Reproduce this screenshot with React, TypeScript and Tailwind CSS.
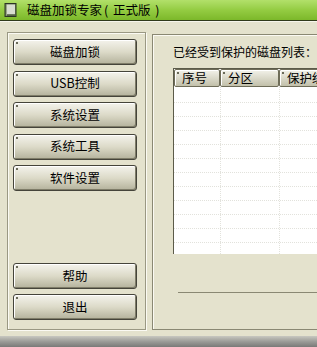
import React from 'react'

const font = { fontFamily: '"Noto Sans CJK SC", "Noto Sans", sans-serif' }

function XpButton({ label }: { label: string }) {
  return (
    <div className="relative h-[26px] w-[124px] rounded-[3px] border border-[#45443a] bg-gradient-to-b from-[#f4f3ec] via-[#dcdac8] to-[#b4b29c] shadow-[inset_-1px_-1px_0_#7e7c68,inset_1px_1px_0_#ffffff] flex items-center justify-center text-[12.5px] text-black">
      <span className="absolute left-[2px] top-[2px] h-[2px] w-[2px] bg-[#6a6a5a]" />
      {label}
    </div>
  )
}

function HeaderCell({ label, width }: { label: string; width: string }) {
  return (
    <div
      className={`relative h-[18px] shrink-0 overflow-hidden whitespace-nowrap rounded-[2px] border border-[#6e6c58] bg-gradient-to-b from-[#f3f2ea] to-[#c2c0aa] pl-[7px] text-[12.5px] leading-[16px] text-black shadow-[inset_1px_1px_0_#ffffff] ${width}`}
    >
      <span className="absolute left-[2px] top-[2px] h-[2px] w-[2px] bg-[#6a6a5a]" />
      {label}
    </div>
  )
}

export default function App() {
  const leftButtons = ['磁盘加锁', 'USB控制', '系统设置', '系统工具', '软件设置']

  return (
    <div className="relative h-[347px] w-[317px] overflow-hidden bg-[#e4e2cd]" style={font}>
      {/* title bar */}
      <div className="flex h-[21px] items-center border-b border-[#2f3a1a] bg-gradient-to-b from-[#b2e06a] via-[#94cc42] to-[#7cb82a] pl-[4px]">
        <svg width="14" height="15" viewBox="0 0 14 15">
          <rect x="1" y="0.5" width="11" height="13" fill="#6f7c5e" stroke="#2c3424" />
          <rect x="3" y="1.5" width="8" height="10" fill="#d8ddd0" />
          <rect x="2" y="1.5" width="1" height="11" fill="#9aa58a" />
          <rect x="3" y="11.5" width="8" height="1" fill="#3d4a30" />
        </svg>
        <span className="ml-[9px] whitespace-nowrap text-[12.5px] leading-none text-black">
          磁盘加锁专家<span className="mx-[2px]">(</span> 正式版 <span className="mx-[2px]">)</span>
        </span>
      </div>

      {/* body */}
      <div className="flex h-[315px] border-t border-[#f6f5ec] pl-[7px] pt-[10px]">
        {/* left panel */}
        <div className="flex h-[298px] w-[139px] shrink-0 flex-col border border-[#9a9883] pl-[5px] pt-[6px] pb-[9px] shadow-[inset_1px_1px_0_#fbfaf3,1px_1px_0_#fbfaf3]">
          <div className="flex flex-col gap-[5.5px]">
            {leftButtons.map((b) => (
              <XpButton key={b} label={b} />
            ))}
          </div>
          <div className="mt-auto flex flex-col gap-[5px]">
            <XpButton label="帮助" />
            <XpButton label="退出" />
          </div>
        </div>

        {/* right panel */}
        <div className="ml-[6px] mt-[2px] flex h-[296px] min-w-0 flex-1 flex-col border-l border-t border-b border-[#8a8873] pl-[20px] shadow-[inset_1px_1px_0_#fbfaf3]">
          <div className="mt-[9px] h-[16px] whitespace-nowrap text-[12px] leading-[16px] text-black">已经受到保护的磁盘列表：</div>
          <div className="mt-[8px] h-[186px] w-[160px] border-l border-t border-[#5c5b4a] bg-white">
            <div className="flex">
              <HeaderCell label="序号" width="w-[46px]" />
              <HeaderCell label="分区" width="w-[59px]" />
              <HeaderCell label="保护级别" width="w-[60px]" />
            </div>
            <div className="relative h-[167px] overflow-hidden">
              {[15, 29, 43, 57, 71, 85, 99, 113, 127, 141, 155].map((y) => (
                <div key={y} className="absolute left-0 right-0 border-t border-dotted border-[#e2e2dc]" style={{ top: y }} />
              ))}
              <div className="absolute bottom-0 top-0 left-[46px] border-l border-dotted border-[#e2e2dc]" />
              <div className="absolute bottom-0 top-0 left-[105px] border-l border-dotted border-[#e2e2dc]" />
            </div>
          </div>
          <div className="ml-[5px] mt-[38px] h-[2px] border-t border-[#8a8873] border-b-white" />
        </div>
      </div>

      {/* bottom shadow */}
      <div className="h-[11px] bg-gradient-to-b from-[#c8c8c0] via-[#9c9c98] to-[#7a7a78]" />
    </div>
  )
}
